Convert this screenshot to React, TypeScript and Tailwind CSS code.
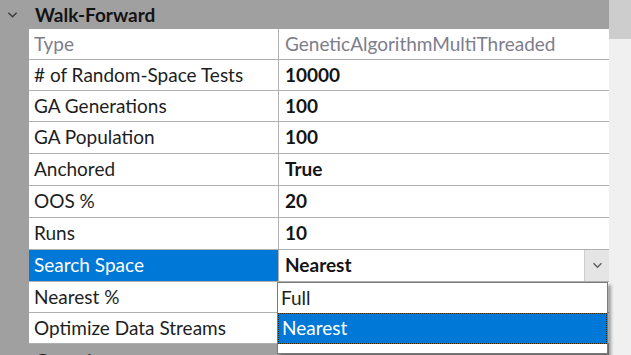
import React from 'react';

type Row = { name: string; value: string; h: string; readOnly?: boolean };

const rows: Row[] = [
  { name: 'Type', value: 'GeneticAlgorithmMultiThreaded', h: 'h-[31px]', readOnly: true },
  { name: '# of Random-Space Tests', value: '10000', h: 'h-[31px]' },
  { name: 'GA Generations', value: '100', h: 'h-[31px]' },
  { name: 'GA Population', value: '100', h: 'h-[32px]' },
  { name: 'Anchored', value: 'True', h: 'h-[32px]' },
  { name: 'OOS %', value: '20', h: 'h-[32px]' },
  { name: 'Runs', value: '10', h: 'h-[32px]' },
  { name: 'Search Space', value: 'Nearest', h: 'h-[32px]' },
  { name: 'Nearest %', value: '', h: 'h-[31px]' },
  { name: 'Optimize Data Streams', value: '', h: 'h-[31px]' },
];

const Chevron = ({ className }: { className?: string }) => (
  <svg viewBox="0 0 12 8" className={className} fill="none" stroke="currentColor" strokeWidth={1.6}>
    <path d="M1.5 1.5L6 6l4.5-4.5" />
  </svg>
);

const App: React.FC = () => {
  return (
    <div
      className="w-[631px] h-[355px] overflow-hidden flex bg-white"
      style={{ fontFamily: 'Lato, "Noto Sans", sans-serif' }}
    >
      <div className="w-[609px] flex flex-col">
        {/* Category header */}
        <div className="h-[29px] shrink-0 bg-[#a0a0a0] flex items-center">
          <Chevron className="w-[11px] h-[8px] ml-[7px] text-[#3c3c3c]" />
          <span className="ml-[17px] text-[19px] font-bold text-[#141414] leading-none">Walk-Forward</span>
        </div>

        <div className="flex">
          <div className="w-[29px] shrink-0 bg-[#a0a0a0]" />
          <div className="flex-1 flex flex-col">
            {rows.map((r) => {
              const selected = r.name === 'Search Space';
              return (
                <div key={r.name} className={`${r.h} flex border-b-[1.5px] border-[#b0b0b0]`}>
                  <div
                    className={`w-[250px] shrink-0 flex items-center pl-[5px] text-[19px] border-r-[1.5px] border-[#b0b0b0] ${
                      selected ? 'bg-[#0078d7] text-white' : r.readOnly ? 'text-[#7d7d8c]' : 'text-[#1e1e1e]'
                    }`}
                  >
                    {r.name}
                  </div>
                  <div className="flex-1 relative flex items-center pl-[6px] text-[19px]">
                    <span className={r.readOnly ? 'text-[#7d7d8c]' : 'font-bold text-[#141414]'}>{r.value}</span>
                    {selected && (
                      <>
                        <div className="absolute right-0 top-0 bottom-0 w-[25px] bg-[#e5e5e5] border-l border-[#cfcfcf] flex items-center justify-center">
                          <Chevron className="w-[11px] h-[7px] text-[#606060]" />
                        </div>
                        {/* open dropdown list */}
                        <div className="absolute left-[-2px] right-[1px] top-[32px] h-[72px] bg-white border border-[#7a7a7a] shadow-[3px_3px_3px_rgba(0,0,0,0.35)] z-10 flex flex-col">
                          <div className="h-[30px] flex items-center pl-[3px] text-[19px] text-[#1e1e1e]">Full</div>
                          <div className="h-[31px] flex items-center pl-[3px] text-[19px] text-white bg-[#0078d7] border border-dotted border-[#3a2a10]">
                            Nearest
                          </div>
                        </div>
                      </>
                    )}
                  </div>
                </div>
              );
            })}
          </div>
        </div>

        {/* Next category header (cut off at the window edge) */}
        <div className="h-[30px] shrink-0 bg-[#a0a0a0] flex items-start pt-[7px]">
          <Chevron className="w-[11px] h-[8px] ml-[7px] mt-[4px] text-[#3c3c3c]" />
          <span className="ml-[17px] text-[19px] font-bold text-[#141414] leading-none">Genetic</span>
        </div>
      </div>

      {/* Scrollbar */}
      <div className="w-[22px] shrink-0 bg-[#f0f0f0] flex flex-col">
        <div className="h-[39px] bg-[#cdcdcd]" />
      </div>
    </div>
  );
};

export default App;
